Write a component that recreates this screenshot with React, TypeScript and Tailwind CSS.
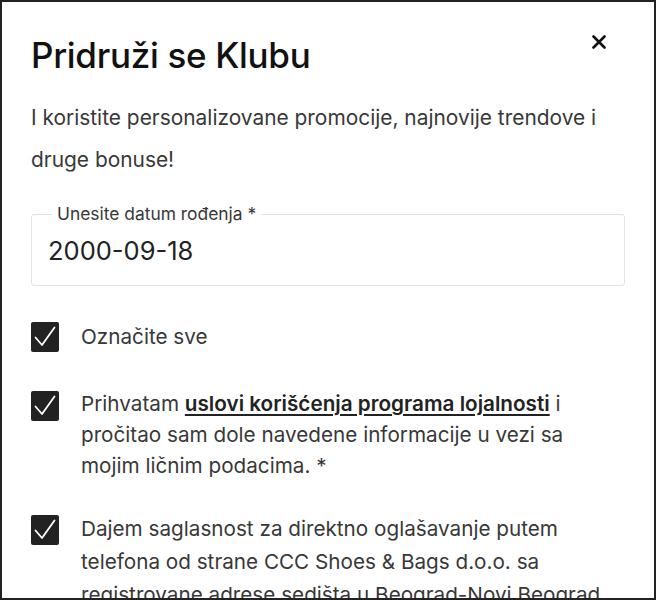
import React from "react";

function Check() {
  return (
    <div className="w-[28px] h-[30px] bg-[#222] rounded-[2px] flex items-center justify-center shrink-0">
      <svg width="24" height="24" viewBox="0 0 24 24" fill="none">
        <path d="M2.5 12.5 L9 20 L21.5 2.5" stroke="white" strokeWidth="1.8" strokeLinecap="round" strokeLinejoin="round" />
      </svg>
    </div>
  );
}

export default function App() {
  return (
    <div
      className="w-[656px] h-[600px] overflow-hidden border-2 border-[#222] bg-white text-[#383838] px-[29px]"
      style={{ fontFamily: "Inter, 'Noto Sans', sans-serif" }}
    >
      <div className="flex justify-between items-start pt-[31px]">
        <h1 className="text-[35px] leading-[44px] font-medium text-[#111] tracking-[-0.3px]">Pridruži se Klubu</h1>
        <svg width="14" height="14" viewBox="0 0 14 14" className="mt-[2px] mr-[19px]">
          <path d="M1.5 1.5 L12.5 12.5 M12.5 1.5 L1.5 12.5" stroke="#111" strokeWidth="2.6" strokeLinecap="round" />
        </svg>
      </div>
      <p className="mt-[20px] text-[20.9px] leading-[42px]">
        I koristite personalizovane promocije, najnovije trendove i druge bonuse!
      </p>
      <div className="relative mt-[33px] h-[72px] border border-[#e3e3e3] rounded-[3px] flex items-center pl-[16px]">
        <span className="absolute -top-[11px] left-[20px] bg-white px-[5px] text-[17.4px] leading-[20px]">
          Unesite datum rođenja *
        </span>
        <span className="text-[25.5px] leading-[30px] text-[#222] mt-[2px]">2000-09-18</span>
      </div>
      <div className="mt-[36px] flex items-center gap-[22px]">
        <Check />
        <span className="text-[20.7px] leading-[30px]">Označite sve</span>
      </div>
      <div className="mt-[36px] flex items-start gap-[22px]">
        <div className="mt-[3px]"><Check /></div>
        <p className="text-[20.7px] leading-[31px] pr-[30px]">
          Prihvatam{" "}
          <a className="font-semibold text-[#222] underline underline-offset-[3px]">uslovi korišćenja programa lojalnosti</a>{" "}
          i pročitao sam dole navedene informacije u vezi sa mojim ličnim podacima. *
        </p>
      </div>
      <div className="mt-[31px] flex items-start gap-[22px]">
        <div className="mt-[3px]"><Check /></div>
        <p className="text-[20.7px] leading-[33px] whitespace-nowrap">
          Dajem saglasnost za direktno oglašavanje putem
          <br />
          telefona od strane CCC Shoes &amp; Bags d.o.o. sa
          <br />
          registrovane adrese sedišta u Beograd-Novi Beograd
        </p>
      </div>
    </div>
  );
}
